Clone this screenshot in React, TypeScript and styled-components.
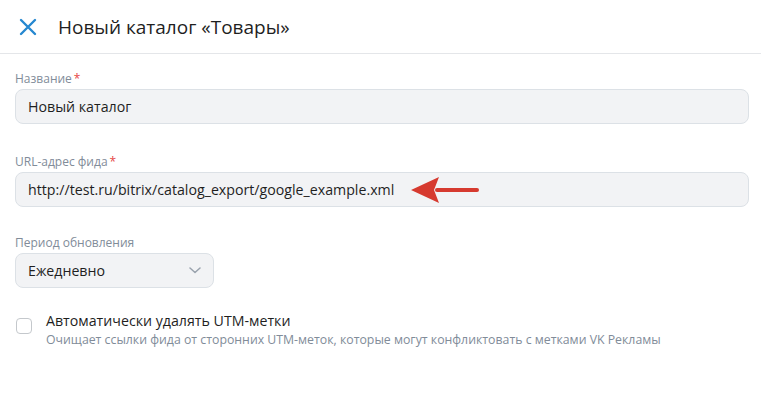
import React from 'react';
import styled, { createGlobalStyle } from 'styled-components';

const GlobalStyle = createGlobalStyle`
  html, body {
    margin: 0;
    padding: 0;
    background: #ffffff;
  }

  body {
    font-family: "Open Sans", "Noto Sans", Arial, sans-serif;
    color: #222222;
  }
`;

const Page = styled.div`
  width: 761px;
  height: 394px;
  background: #ffffff;
`;

const Header = styled.header`
  height: 53px;
  display: flex;
  align-items: center;
  gap: 21px;
  padding-left: 19px;
  border-bottom: 1px solid #e4e6e9;
`;

const CloseButton = styled.button`
  width: 18px;
  height: 18px;
  padding: 0;
  border: 0;
  background: none;
  display: flex;
  align-items: center;
  justify-content: center;
  cursor: pointer;
`;

const Title = styled.h1`
  margin: 0;
  font-size: 19px;
  font-weight: 400;
  color: #1f1f1f;
`;

const Form = styled.div`
  display: flex;
  flex-direction: column;
  padding: 17px 12px 0 15px;
`;

const Field = styled.div<{ $gap?: number }>`
  display: flex;
  flex-direction: column;
  margin-bottom: ${({ $gap }) => $gap ?? 28}px;
`;

const Label = styled.label`
  font-size: 12px;
  line-height: 16px;
  color: #818c99;
  margin-bottom: 2px;
`;

const Required = styled.span`
  color: #e64646;
  margin-left: 2px;
`;

const InputBox = styled.div<{ $width?: number }>`
  position: relative;
  box-sizing: border-box;
  height: 35px;
  width: ${({ $width }) => ($width ? `${$width}px` : '100%')};
  display: flex;
  align-items: center;
  padding: 0 12px;
  background: #f2f3f5;
  border: 1px solid #dce1e6;
  border-radius: 8px;
  font-size: 14.2px;
  color: #1f1f1f;
`;

const Value = styled.span`
  flex: 1;
`;

const Pointer = styled.svg`
  position: absolute;
  left: 395px;
  top: 3px;
`;

const CheckRow = styled.div`
  display: flex;
  gap: 14px;
  align-items: flex-start;
  padding-left: 1px;
`;

const CheckBox = styled.span`
  box-sizing: border-box;
  width: 16px;
  height: 16px;
  margin-top: 7px;
  border: 1px solid #c4c8cc;
  border-radius: 4px;
  background: #ffffff;
  flex: none;
`;

const CheckText = styled.div`
  display: flex;
  flex-direction: column;
`;

const CheckTitle = styled.span`
  font-size: 14.2px;
  line-height: 20px;
  color: #1f1f1f;
`;

const CheckHint = styled.span`
  font-size: 12.3px;
  line-height: 17px;
  color: #818c99;
`;

function CloseIcon() {
  return (
    <svg width="18" height="18" viewBox="0 0 18 18">
      <path d="M2 2 L16 16 M16 2 L2 16" stroke="#2688d0" strokeWidth="2.4" strokeLinecap="round" />
    </svg>
  );
}

function Chevron() {
  return (
    <svg width="12" height="7" viewBox="0 0 12 7">
      <path d="M1 1 L6 5.5 L11 1" fill="none" stroke="#99a2ad" strokeWidth="1.5" strokeLinecap="round" strokeLinejoin="round" />
    </svg>
  );
}

export default function App() {
  return (
    <Page>
      <GlobalStyle />
      <Header>
        <CloseButton aria-label="Закрыть">
          <CloseIcon />
        </CloseButton>
        <Title>Новый каталог «Товары»</Title>
      </Header>

      <Form>
        <Field $gap={30}>
          <Label>Название<Required>*</Required></Label>
          <InputBox>
            <Value>Новый каталог</Value>
          </InputBox>
        </Field>

        <Field>
          <Label>URL-адрес фида<Required>*</Required></Label>
          <InputBox>
            <Value>http://test.ru/bitrix/catalog_export/google_example.xml</Value>
            <Pointer width="70" height="28" viewBox="0 0 70 28">
              <path d="M66 14 L26 14" stroke="#d63a2f" strokeWidth="4" strokeLinecap="round" />
              <path d="M0 14 L28 1 L23 14 L28 27 Z" fill="#d63a2f" />
            </Pointer>
          </InputBox>
        </Field>

        <Field $gap={23}>
          <Label>Период обновления</Label>
          <InputBox $width={199}>
            <Value>Ежедневно</Value>
            <Chevron />
          </InputBox>
        </Field>

        <CheckRow>
          <CheckBox />
          <CheckText>
            <CheckTitle>Автоматически удалять UTM-метки</CheckTitle>
            <CheckHint>
              Очищает ссылки фида от сторонних UTM-меток, которые могут конфликтовать с метками VK Рекламы
            </CheckHint>
          </CheckText>
        </CheckRow>
      </Form>
    </Page>
  );
}
